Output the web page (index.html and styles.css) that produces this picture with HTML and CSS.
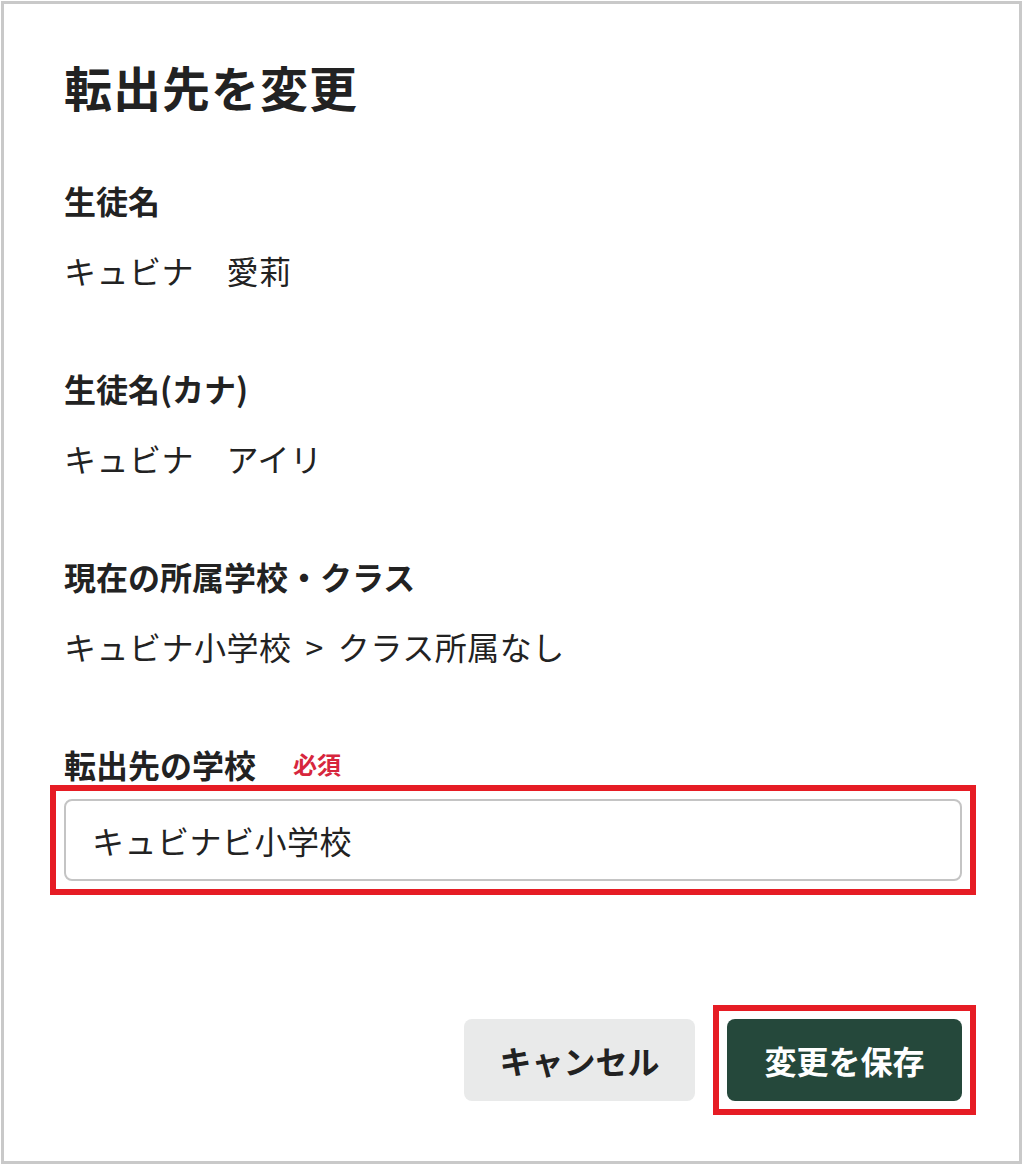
FILE: index.html
```html
<!DOCTYPE html>
<html lang="ja">
<head>
<meta charset="utf-8">
<title>転出先を変更</title>
<link rel="stylesheet" href="styles.css">
</head>
<body>
<div class="frame">
  <h1 class="title">転出先を変更</h1>
  <div class="field">
    <div class="label">生徒名</div>
    <div class="value">キュビナ　愛莉</div>
  </div>
  <div class="field">
    <div class="label">生徒名(カナ)</div>
    <div class="value">キュビナ　アイリ</div>
  </div>
  <div class="field">
    <div class="label">現在の所属学校・クラス</div>
    <div class="value">キュビナ小学校<span class="sep">&gt;</span>クラス所属なし</div>
  </div>
  <div class="field">
    <div class="label label-row"><span>転出先の学校</span><span class="required">必須</span></div>
    <div class="input-wrap highlight">
      <input class="input" type="text" value="キュビナビ小学校">
    </div>
  </div>
  <div class="actions">
    <button class="btn btn-cancel" type="button">キャンセル</button>
    <div class="highlight save-wrap">
      <button class="btn btn-save" type="button">変更を保存</button>
    </div>
  </div>
</div>
</body>
</html>
```
FILE: styles.css
```css
html, body {
  margin: 0;
  padding: 0;
  background: #ffffff;
}
body {
  font-family: "Noto Sans CJK JP", "Noto Sans", sans-serif;
  color: #222222;
}
.frame {
  box-sizing: border-box;
  width: 1021px;
  height: 1163px;
  margin: 1px 0 0 1px;
  border: 3px solid #c9c9c9;
  padding: 46px 57px 0 60px;
  display: flex;
  flex-direction: column;
}
.title {
  margin: 0;
  font-size: 48px;
  line-height: 72px;
  font-weight: 700;
  color: #222222;
  letter-spacing: 1px;
}
.field {
  display: flex;
  flex-direction: column;
  margin-top: 70px;
}
.title + .field {
  margin-top: 54px;
}
.label {
  font-size: 32px;
  line-height: 48px;
  font-weight: 700;
  color: #222222;
}
.label-row {
  display: flex;
  align-items: center;
  height: 48px;
}
.required {
  margin-left: 37px;
  font-size: 24px;
  line-height: 48px;
  font-weight: 700;
  color: #d7263d;
}
.value {
  margin-top: 22px;
  font-size: 32px;
  line-height: 48px;
  font-weight: 400;
  color: #222222;
  letter-spacing: 0.5px;
}
.sep {
  margin: 0 14px;
}
.input-wrap {
  margin-top: 11px;
  display: flex;
}
.input {
  box-sizing: border-box;
  width: 100%;
  height: 82px;
  margin: 0;
  padding: 0 26px;
  border: 2px solid #c4c4c4;
  border-radius: 8px;
  background: #ffffff;
  font-family: "Noto Sans CJK JP", "Noto Sans", sans-serif;
  font-size: 32px;
  color: #222222;
  letter-spacing: 0.5px;
  outline: none;
}
.highlight {
  outline: 6px solid #e61c24;
  outline-offset: 8px;
}
.save-wrap {
  display: flex;
}
.actions {
  margin-top: 138px;
  display: flex;
  justify-content: flex-end;
  gap: 32px;
}
.btn {
  box-sizing: border-box;
  height: 82px;
  padding: 0;
  border: none;
  border-radius: 8px;
  font-family: "Noto Sans CJK JP", "Noto Sans", sans-serif;
  font-size: 32px;
  font-weight: 700;
  line-height: 82px;
  white-space: nowrap;
  text-align: center;
  cursor: pointer;
}
.btn-cancel {
  background: #e9eaea;
  color: #222222;
  width: 231px;
}
.btn-save {
  background: #25483b;
  color: #ffffff;
  width: 235px;
}
```
